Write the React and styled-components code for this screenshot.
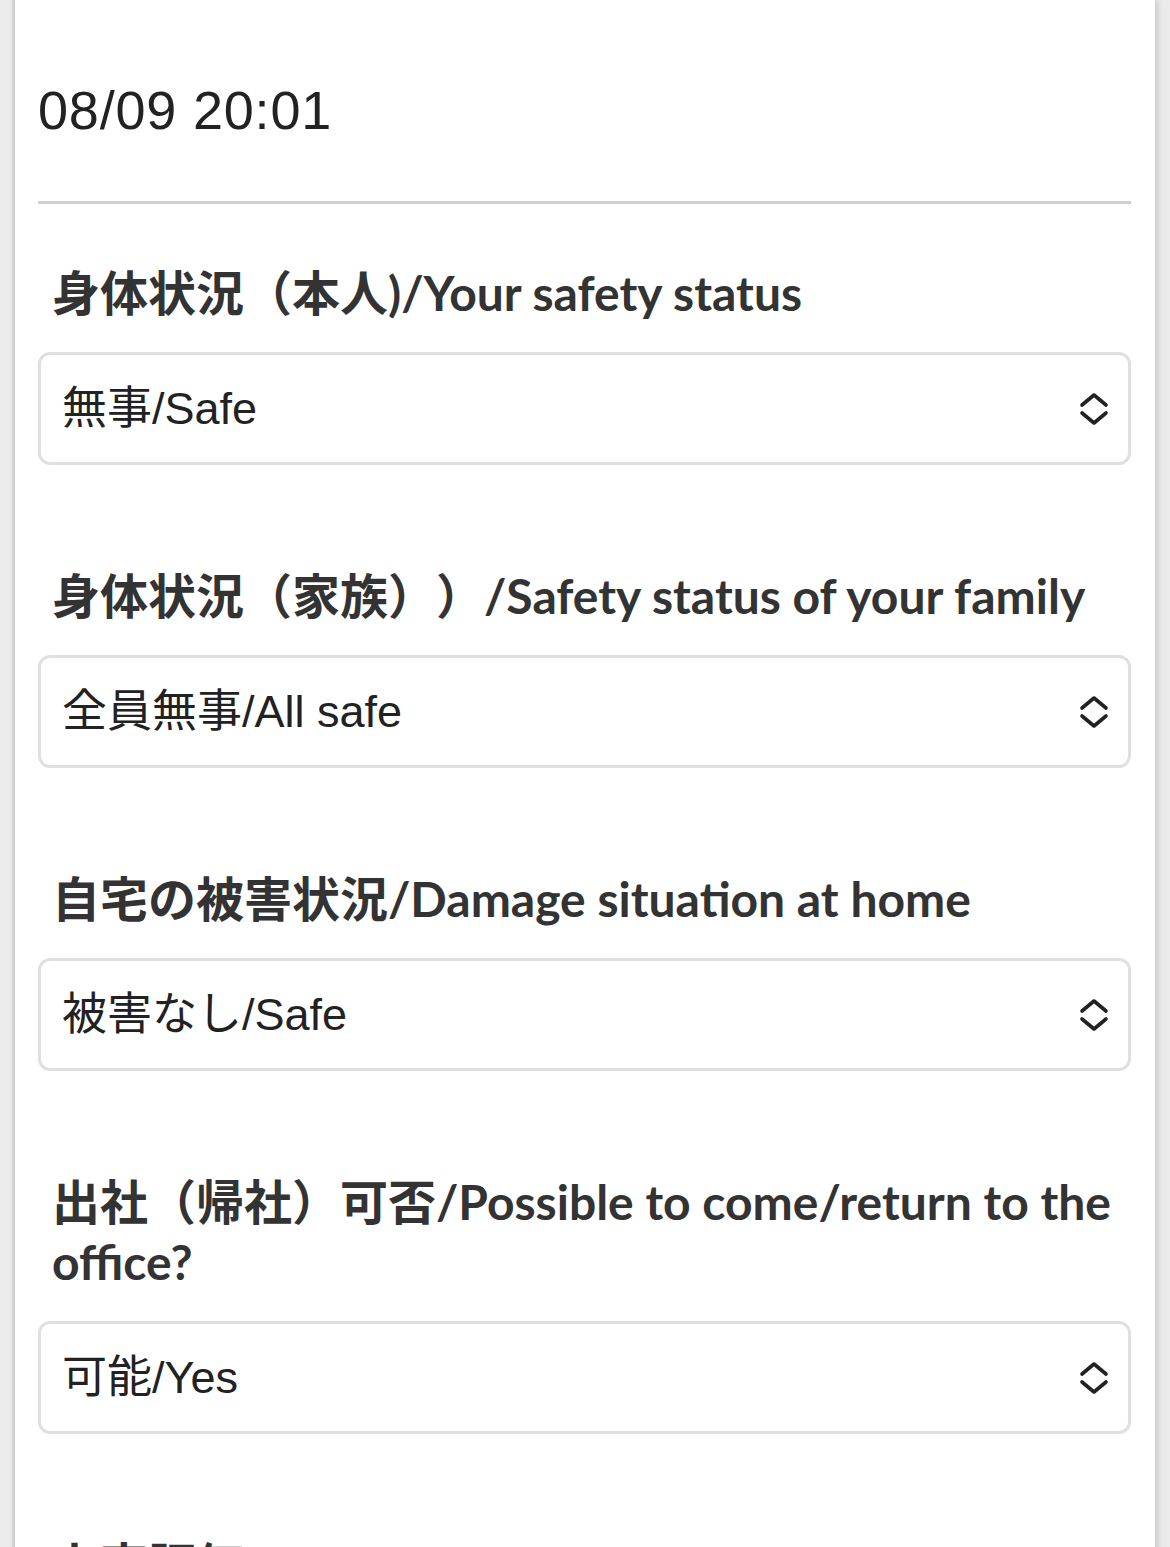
import React from "react";
import styled, { createGlobalStyle } from "styled-components";

const Global = createGlobalStyle`
  html, body {
    margin: 0;
    padding: 0;
    background: #ebebeb;
  }
  * { box-sizing: border-box; }
`;

const Card = styled.main`
  margin: 0 15px;
  min-height: 1547px;
  background: #ffffff;
  padding: 70px 24px 0 23px;
  box-shadow: -3px 0 0 #d2d2d2, 3px 0 6px rgba(0, 0, 0, 0.14);
`;

const DateText = styled.div`
  font-family: "Liberation Sans", Arial, sans-serif;
  font-size: 54px;
  line-height: 80px;
  color: #222;
  letter-spacing: 0.8px;
`;

const Divider = styled.hr`
  border: none;
  height: 3px;
  background: #d0d0d0;
  margin: 51px 0 59px;
`;

const Field = styled.section`
  margin-bottom: 101px;
`;

const Label = styled.h2`
  margin: 0 0 29px;
  padding: 0 0 0 14px;
  font-family: Lato, "Noto Sans CJK JP", sans-serif;
  font-weight: 700;
  font-size: 48px;
  line-height: 60px;
  color: #333;
  text-spacing-trim: space-all;
`;

const SelectWrap = styled.div`
  position: relative;
  height: 113px;
`;

const Select = styled.select`
  appearance: none;
  -webkit-appearance: none;
  width: 100%;
  height: 100%;
  border: 3px solid #e0e0e0;
  border-radius: 12px;
  background: #fff;
  padding: 0 80px 0 21px;
  font-family: "Liberation Sans", Arial, "Noto Sans CJK JP", sans-serif;
  font-size: 45px;
  color: #222;
  outline: none;
`;

const Chevron = styled.svg`
  position: absolute;
  right: 22px;
  top: 50%;
  transform: translateY(-50%);
  pointer-events: none;
`;

function UpDown() {
  return (
    <Chevron width="30" height="34" viewBox="0 0 30 34" fill="none">
      <polyline points="3,13 15,3 27,13" stroke="#222" strokeWidth="3.6" strokeLinecap="round" strokeLinejoin="round" />
      <polyline points="3,21 15,31 27,21" stroke="#222" strokeWidth="3.6" strokeLinecap="round" strokeLinejoin="round" />
    </Chevron>
  );
}

const fields = [
  { label: "身体状況（本人)/Your safety status", value: "無事/Safe" },
  { label: "身体状況（家族））/Safety status of your family", value: "全員無事/All safe" },
  { label: "自宅の被害状況/Damage situation at home", value: "被害なし/Safe" },
  { label: "出社（帰社）可否/Possible to come/return to the office?", value: "可能/Yes" },
];

export default function App() {
  return (
    <>
      <Global />
      <Card>
        <DateText>08/09 20:01</DateText>
        <Divider />
        {fields.map((f) => (
          <Field key={f.label}>
            <Label>{f.label}</Label>
            <SelectWrap>
              <Select defaultValue={f.value}>
                <option>{f.value}</option>
              </Select>
              <UpDown />
            </SelectWrap>
          </Field>
        ))}
        <Field>
          <Label>上京評価/Business trip</Label>
        </Field>
      </Card>
    </>
  );
}
